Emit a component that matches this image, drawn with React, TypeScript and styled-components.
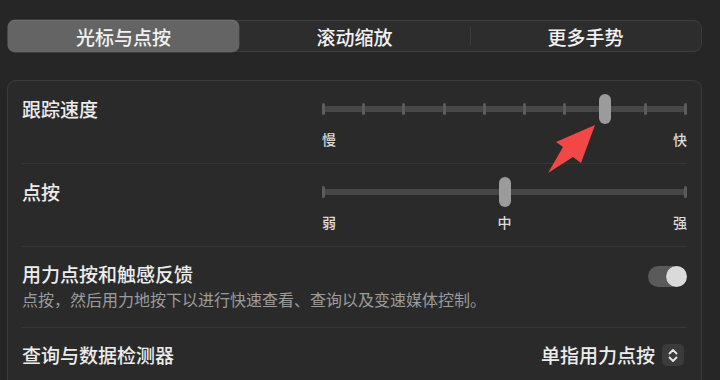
import React from 'react';
import styled, { createGlobalStyle } from 'styled-components';

const Global = createGlobalStyle`
	html, body {
		margin: 0;
		padding: 0;
		background: #262626;
	}
	body {
		font-family: 'Noto Sans CJK SC', 'Noto Sans', sans-serif;
		color: #ececec;
	}
`;

const tabs = ['光标与点按', '滚动缩放', '更多手势'];

const App: React.FC = () => {
	return (
		<Page>
			<Global />
			<Segmented>
				{tabs.map((t, i) => (
					<Segment key={t} $active={i === 0} $divider={i === 2}>
						{t}
					</Segment>
				))}
			</Segmented>
			<Panel>
				<SliderRow>
					<Label>跟踪速度</Label>
					<div>
						<Track>
							{Array.from({ length: 10 }).map((_, i) => (
								<Tick key={i} style={{ left: `calc(${(i / 9) * 100}% - ${(i / 9) * 3}px)` }} />
							))}
							<Thumb $pos={7 / 9} />
						</Track>
						<Marks>
							<span>慢</span>
							<span>快</span>
						</Marks>
					</div>
				</SliderRow>
				<SliderRow>
					<Label>点按</Label>
					<div>
						<Track>
							<Tick style={{ left: 0 }} />
							<Tick style={{ left: 'calc(100% - 3px)' }} />
							<Thumb $pos={0.5} />
						</Track>
						<Marks>
							<span>弱</span>
							<span>中</span>
							<span>强</span>
						</Marks>
					</div>
				</SliderRow>
				<ToggleRow>
					<div>
						<Label>用力点按和触感反馈</Label>
						<Sub>点按，然后用力地按下以进行快速查看、查询以及变速媒体控制。</Sub>
					</div>
					<Toggle>
						<Knob />
					</Toggle>
				</ToggleRow>
				<PopupRow>
					<Label>查询与数据检测器</Label>
					<Value>
						单指用力点按
						<Stepper>
							<svg width="10" height="15" viewBox="0 0 10 15" fill="none">
								<path d="M1.5 5.5 L5 2 L8.5 5.5" stroke="#e6e6e6" strokeWidth="1.8" strokeLinecap="round" strokeLinejoin="round" />
								<path d="M1.5 9.5 L5 13 L8.5 9.5" stroke="#e6e6e6" strokeWidth="1.8" strokeLinecap="round" strokeLinejoin="round" />
							</svg>
						</Stepper>
					</Value>
				</PopupRow>
			</Panel>
			<Arrow width="60" height="60" viewBox="0 0 60 60">
				<polygon points="55,5 41,43 33,37 8,53 23,27 16,22" fill="#f24747" />
			</Arrow>
		</Page>
	);
};

const Page = styled.div`
	position: relative;
	width: 720px;
	height: 380px;
	overflow: hidden;
	padding: 20px 18px 0 7px;
	box-sizing: border-box;
`;

const Segmented = styled.div`
	display: flex;
	height: 32px;
	box-sizing: border-box;
	background: #2d2d2d;
	border: 1px solid #3c3c3c;
	border-radius: 8px;
`;

const Segment = styled.div<{ $active?: boolean; $divider?: boolean }>`
	flex: 1;
	display: flex;
	align-items: center;
	justify-content: center;
	position: relative;
	font-size: 19px;
	font-weight: 500;
	color: #f2f2f2;
	border-radius: 7px;
	margin: -1px 0;
	background: ${(p) => (p.$active ? '#646464' : 'transparent')};
	box-shadow: ${(p) => (p.$active ? 'inset 0 0.5px 0 #7a7a7a, 0 0 0 0.5px #555' : 'none')};
	&::before {
		content: '';
		display: ${(p) => (p.$divider ? 'block' : 'none')};
		position: absolute;
		left: 0;
		top: 7px;
		bottom: 7px;
		width: 1px;
		background: #3e3e3e;
	}
`;

const Panel = styled.div`
	margin-top: 28px;
	height: 320px;
	background: #2a2a2a;
	border: 1px solid #3a3a3a;
	border-radius: 9px;
	padding: 0 14px;
`;

const Row = styled.div`
	border-bottom: 1px solid #363636;
	&:last-child {
		border-bottom: none;
	}
`;

const SliderRow = styled(Row)`
	display: grid;
	grid-template-columns: 300px 1fr;
	align-items: start;
	padding: 13px 0 14px;
`;

const Label = styled.div`
	font-size: 19px;
	font-weight: 500;
	line-height: 30px;
	color: #ededed;
`;

const Track = styled.div`
	position: relative;
	height: 30px;
	&::before {
		content: '';
		position: absolute;
		left: 0;
		right: 0;
		top: 12px;
		height: 6px;
		border-radius: 3px;
		background: #474747;
	}
`;

const Tick = styled.div`
	position: absolute;
	top: 9px;
	width: 3px;
	height: 12px;
	border-radius: 1.5px;
	background: #5c5c5c;
`;

const Thumb = styled.div<{ $pos: number }>`
	position: absolute;
	top: 0;
	left: calc(${(p) => p.$pos * 100}% - ${(p) => p.$pos * 3}px - 4.5px);
	width: 12px;
	height: 30px;
	border-radius: 6px;
	background: #9b9b9b;
`;

const Marks = styled.div`
	display: flex;
	justify-content: space-between;
	margin-top: 5px;
	font-size: 14px;
	font-weight: 500;
	line-height: 20px;
	color: #dcdcdc;
`;

const ToggleRow = styled(Row)`
	display: flex;
	justify-content: space-between;
	align-items: flex-start;
	padding: 13px 0 17px;
	${Label} {
		line-height: 28px;
	}
`;

const Sub = styled.div`
	font-size: 16px;
	line-height: 22px;
	color: #9c9c9c;
`;

const Toggle = styled.div`
	margin-top: 6px;
	width: 39px;
	height: 21px;
	border-radius: 11px;
	background: #5a5a5a;
	display: flex;
	justify-content: flex-end;
`;

const Knob = styled.div`
	width: 21px;
	height: 21px;
	border-radius: 50%;
	background: #dadada;
	box-shadow: 0 0 1px rgba(0, 0, 0, 0.5);
`;

const PopupRow = styled(Row)`
	display: flex;
	justify-content: space-between;
	align-items: center;
	padding: 12px 0;
`;

const Value = styled.div`
	display: flex;
	align-items: center;
	gap: 7px;
	font-size: 19px;
	font-weight: 500;
	line-height: 30px;
	color: #ededed;
	margin-right: 3px;
`;

const Stepper = styled.div`
	width: 22px;
	height: 22px;
	border-radius: 5px;
	background: #3b3b3b;
	display: flex;
	align-items: center;
	justify-content: center;
`;

const Arrow = styled.svg`
	position: absolute;
	left: 540px;
	top: 120px;
	pointer-events: none;
`;

export default App;
